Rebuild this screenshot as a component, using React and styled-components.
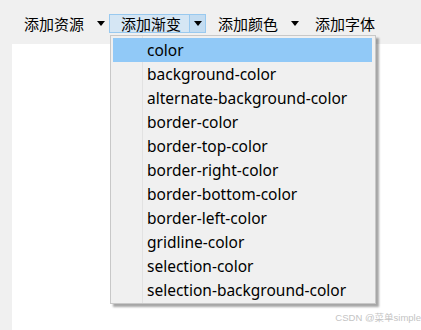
import React from 'react';
import styled, { createGlobalStyle } from 'styled-components';

const GlobalStyle = createGlobalStyle`
  html, body {
    margin: 0;
    padding: 0;
    background: #f0f0f0;
  }
  body {
    font-family: "Noto Sans", "Noto Sans CJK SC", sans-serif;
  }
`;

const Window = styled.div`
  position: relative;
  width: 421px;
  height: 330px;
  overflow: hidden;
  background: #f0f0f0;
  display: flex;
  flex-direction: column;
`;

const Toolbar = styled.div`
  display: flex;
  align-items: center;
  height: 19px;
  padding: 14px 0 11px 12px;
`;

const ToolButton = styled.div`
  display: flex;
  height: 19px;
  box-sizing: border-box;
  border: 1px solid ${({ active }) => (active ? '#99c9ef' : 'transparent')};
  background: ${({ active }) => (active ? '#d5e6f4' : 'transparent')};
`;

const ButtonLabel = styled.span`
  display: flex;
  align-items: center;
  padding: 0 8px 0 11px;
  font-family: "Noto Sans CJK SC", sans-serif;
  font-size: 15px;
  color: #000;
  line-height: 17px;
`;

const ArrowPart = styled.span`
  display: flex;
  align-items: center;
  justify-content: center;
  width: 15px;
  background: ${({ active }) => (active ? '#c3dcf1' : 'transparent')};
  border-left: 1px solid ${({ active }) => (active ? '#99c9ef' : 'transparent')};
`;

const Triangle = styled.span`
  width: 0;
  height: 0;
  border-left: 4.5px solid transparent;
  border-right: 4.5px solid transparent;
  border-top: 5px solid #000;
`;

const Content = styled.div`
  flex: 1;
  margin-left: 12px;
  background: #fff;
`;

const Menu = styled.ul`
  position: absolute;
  left: 110px;
  top: 35px;
  width: 266px;
  margin: 0;
  padding: 2px 3px 1px 2px;
  box-sizing: border-box;
  list-style: none;
  background: #f0f0f0;
  border: 1px solid #c8c8c8;
  box-shadow: 3px 3px 2px rgba(0, 0, 0, 0.35);
  background-image: linear-gradient(#e2e2e2, #e2e2e2);
  background-repeat: no-repeat;
  background-position: 31px 0;
  background-size: 1px 100%;
`;

const MenuItem = styled.li`
  height: 24px;
  display: flex;
  align-items: center;
  padding-left: 34px;
  font-size: 15.5px;
  color: #000;
  background: ${({ selected }) => (selected ? '#91c9f7' : 'transparent')};
`;

const Watermark = styled.div`
  position: absolute;
  right: 0;
  bottom: 6px;
  font-family: "Liberation Sans", "Noto Sans CJK SC", sans-serif;
  font-size: 9.5px;
  color: #c4c4c4;
`;

const tools = [
  { label: '添加资源' },
  { label: '添加渐变', active: true },
  { label: '添加颜色' },
  { label: '添加字体', noArrow: true },
];

const items = [
  'color',
  'background-color',
  'alternate-background-color',
  'border-color',
  'border-top-color',
  'border-right-color',
  'border-bottom-color',
  'border-left-color',
  'gridline-color',
  'selection-color',
  'selection-background-color',
];

export default function App() {
  return (
    <Window>
      <GlobalStyle />
      <Toolbar>
        {tools.map(t => (
          <ToolButton key={t.label} active={t.active}>
            <ButtonLabel>{t.label}</ButtonLabel>
            {!t.noArrow && (
              <ArrowPart active={t.active}>
                <Triangle />
              </ArrowPart>
            )}
          </ToolButton>
        ))}
      </Toolbar>
      <Content />
      <Menu>
        {items.map((it, i) => (
          <MenuItem key={it} selected={i === 0}>
            {it}
          </MenuItem>
        ))}
      </Menu>
      <Watermark>CSDN @菜单simple</Watermark>
    </Window>
  );
}
